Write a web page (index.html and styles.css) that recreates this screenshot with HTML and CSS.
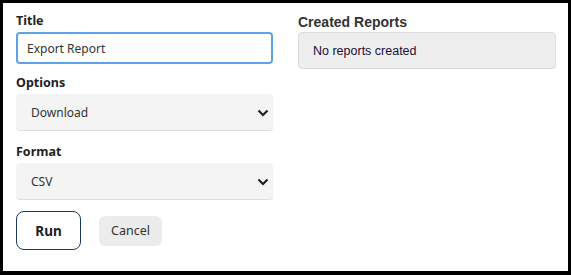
FILE: index.html
```html
<!DOCTYPE html>
<html lang="en">
  <head>
    <meta charset="UTF-8" />
    <meta name="viewport" content="width=device-width, initial-scale=1.0" />
    <title>Export Report</title>
    <link rel="stylesheet" href="styles.css">
  </head>
  <body>
    <section class="frame">
      <!-- left: report form -->
      <form class="report-form">
        <label class="field-label" for="title">Title</label>
        <input class="text-input" id="title" type="text" value="Export Report" />

        <label class="field-label" for="options">Options</label>
        <div class="select-wrap">
          <select class="select-input" id="options">
            <option>Download</option>
            <option>Email</option>
          </select>
          <svg class="chevron" width="12" height="8" viewBox="0 0 12 8">
            <path d="M1.5 1.5 L6 6 L10.5 1.5" fill="none" stroke="#222" stroke-width="2.2" />
          </svg>
        </div>

        <label class="field-label" for="format">Format</label>
        <div class="select-wrap">
          <select class="select-input" id="format">
            <option>CSV</option>
            <option>XLSX</option>
          </select>
          <svg class="chevron" width="12" height="8" viewBox="0 0 12 8">
            <path d="M1.5 1.5 L6 6 L10.5 1.5" fill="none" stroke="#222" stroke-width="2.2" />
          </svg>
        </div>

        <div class="actions">
          <button class="btn-run" type="button">Run</button>
          <button class="btn-cancel" type="button">Cancel</button>
        </div>
      </form>
      <!-- right: created reports -->
      <article class="reports">
        <h4 class="reports-title">Created Reports</h4>
        <div class="reports-box">No reports created</div>
      </article>
    </section>
  </body>
</html>
```

FILE: styles.css
```css
* {
  margin: 0;
  padding: 0;
  box-sizing: border-box;
}

body {
  font-family: "Noto Sans", "Open Sans", sans-serif;
  background-color: #000;
}

.frame {
  width: 571px;
  height: 275px;
  border: 3px solid #000;
  border-bottom-width: 4px;
  background-color: #fff;
  display: flex;
  gap: 25px;
  padding: 8px 12px 0 13px;
}

.report-form {
  width: 257px;
  display: flex;
  flex-direction: column;
}

.field-label {
  font-size: 12.5px;
  font-weight: 700;
  line-height: 20px;
  color: #222;
  margin-bottom: 1px;
}

.text-input {
  height: 32px;
  border: 2px solid #5ea2e8;
  border-radius: 4px;
  padding: 0 9px;
  font-family: inherit;
  font-size: 12px;
  color: #333;
  margin-bottom: 9px;
  outline: none;
}

.select-wrap {
  position: relative;
  margin-bottom: 11px;
}

.select-input {
  width: 100%;
  height: 37px;
  appearance: none;
  border: none;
  border-bottom: 1px solid #dedede;
  border-radius: 4px;
  background-color: #f4f4f4;
  padding: 0 15px;
  font-family: inherit;
  font-size: 12px;
  color: #333;
}

.chevron {
  position: absolute;
  right: 4px;
  top: 15px;
  pointer-events: none;
}

.actions {
  display: flex;
  align-items: center;
  gap: 18px;
}

.btn-run {
  width: 65px;
  height: 39px;
  border: 1px solid #1d3a5c;
  border-radius: 8px;
  background-color: #fff;
  font-family: inherit;
  font-size: 13.5px;
  font-weight: 700;
  color: #222;
}

.btn-cancel {
  width: 63px;
  height: 30px;
  border: none;
  border-radius: 6px;
  background-color: #ececec;
  font-family: inherit;
  font-size: 12.5px;
  color: #333;
}

.reports {
  width: 258px;
}

.reports-title {
  font-family: "Liberation Sans", Arial, sans-serif;
  font-size: 14px;
  font-weight: 700;
  line-height: 18px;
  color: #333;
  margin-top: 2px;
  margin-bottom: 1px;
}

.reports-box {
  height: 37px;
  border: 1px solid #dcdcdc;
  border-radius: 4px;
  background-color: #eeeeee;
  padding: 0 14px;
  display: flex;
  align-items: center;
  font-family: "Liberation Sans", Arial, sans-serif;
  font-size: 12.5px;
  color: #1a1033;
}
```
